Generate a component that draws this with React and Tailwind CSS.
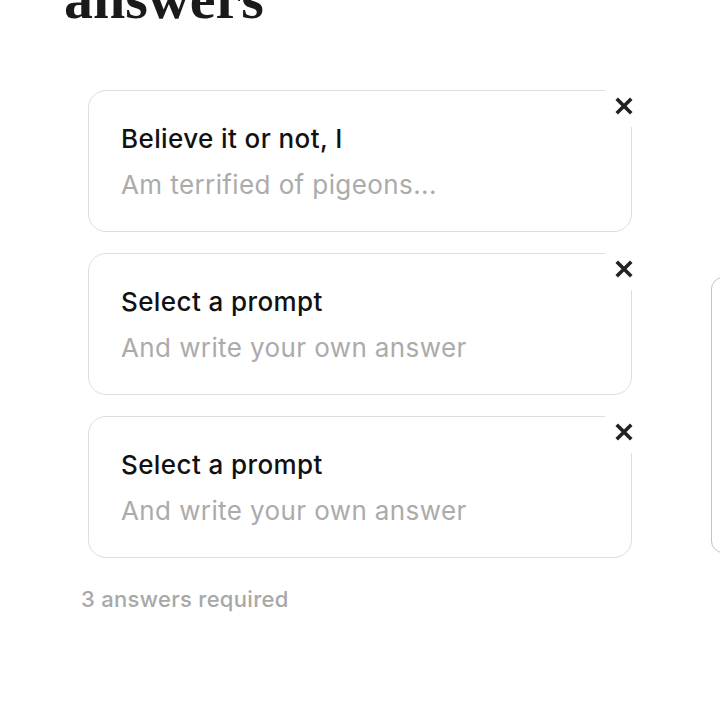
import React from "react";

const prompts = [
  { title: "Believe it or not, I", answer: "Am terrified of pigeons..." },
  { title: "Select a prompt", answer: "And write your own answer" },
  { title: "Select a prompt", answer: "And write your own answer" },
];

function CloseIcon() {
  return (
    <svg width="18" height="18" viewBox="0 0 18 18" fill="none">
      <path
        d="M3 3L15 15M15 3L3 15"
        stroke="#222222"
        strokeWidth="3.6"
        strokeLinecap="square"
      />
    </svg>
  );
}

function PromptCard({ title, answer }) {
  return (
    <div className="relative h-[142px] w-[544px] rounded-[18px] border border-[#dedede] bg-white px-[32px] pt-[32px]">
      <div className="text-[26px] leading-[32px] font-medium tracking-[0.4px] text-[#111111]">
        {title}
      </div>
      <div className="mt-[14px] text-[26px] leading-[32px] tracking-[0.4px] text-[#ababab]">
        {answer}
      </div>
      <button className="absolute right-[-12px] top-[-6px] flex h-[42px] w-[38px] items-center justify-center bg-white">
        <CloseIcon />
      </button>
    </div>
  );
}

export default function App() {
  return (
    <div
      className="flex h-[720px] w-[720px] items-start overflow-hidden bg-white"
      style={{ fontFamily: "Inter, 'Liberation Sans', sans-serif" }}
    >
      <div className="w-[711px] shrink-0 pl-[64px]">
        <h1
          className="mt-[-30px] text-[58px] leading-[58px] font-bold text-[#1a1a1a]"
          style={{ fontFamily: "'Liberation Serif', serif" }}
        >
          answers
        </h1>
        <div className="mt-[62px] ml-[24px] flex flex-col gap-[21px]">
          {prompts.map((p, i) => (
            <PromptCard key={i} title={p.title} answer={p.answer} />
          ))}
        </div>
        <p className="mt-[27px] ml-[17px] text-[22px] leading-[28px] font-medium tracking-[0.3px] text-[#a8a8a8]">
          3 answers required
        </p>
      </div>
      <div className="mt-[277px] h-[276px] w-[200px] shrink-0 rounded-[12px] border-[1.5px] border-[#c4c4c4]" />
    </div>
  );
}
